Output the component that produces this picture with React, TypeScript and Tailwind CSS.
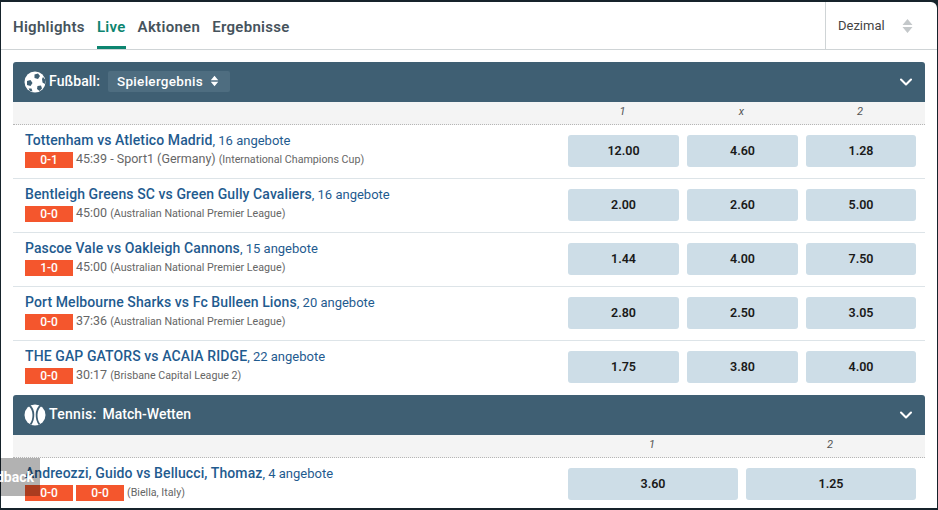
import { ChevronDown } from "lucide-react"

const font = "font-['Roboto','Liberation_Sans',sans-serif]"

const Updown = ({ className }: { className: string }) => (
    <svg width="11" height="16" viewBox="0 0 11 16" className={className}>
        <path d="M5.5 1 L10.5 7 H0.5 Z M5.5 15 L0.5 9 H10.5 Z" fill="currentColor" />
    </svg>
)

const SoccerBall = () => (
    <svg width="22" height="22" viewBox="0 0 22 22" className="shrink-0">
        <circle cx="11" cy="11" r="10.5" fill="#fff" />
        <path d="M10.5 3.5 L14 2.5 L16 5 L14 8 L10.5 7 Z" fill="#3f5f73" />
        <path d="M3 10 L6.5 9 L8.5 12 L6.5 15 L3 14 Z" fill="#3f5f73" />
        <path d="M19 6 L21.5 9 L21 13 L18.5 11.5 L18 8 Z" fill="#3f5f73" />
        <path d="M13.5 15 L17 14.5 L18 17.5 L15.5 20 L13 18 Z" fill="#3f5f73" />
        <path d="M4.5 17.5 L7.5 17.5 L8.5 20.5 L6 20 Z" fill="#3f5f73" />
    </svg>
)

const TennisBall = () => (
    <svg width="22" height="22" viewBox="0 0 22 22" className="shrink-0">
        <circle cx="11" cy="11" r="10.5" fill="#fff" />
        <path d="M5.5 1.5 C10.5 6 10.5 15 6.5 20.5" fill="none" stroke="#3f5f73" strokeWidth="1.8" />
        <path d="M16.5 1.5 C11.5 6 11.5 15 15.5 20.5" fill="none" stroke="#3f5f73" strokeWidth="1.8" />
    </svg>
)

type Match = {
    name: string
    offers: string
    scores: string[]
    time?: string
    info: string
    odds: string[]
}

const football: Match[] = [
    { name: "Tottenham vs Atletico Madrid", offers: "16 angebote", scores: ["0-1"], time: "45:39 - Sport1 (Germany)", info: "(International Champions Cup)", odds: ["12.00", "4.60", "1.28"] },
    { name: "Bentleigh Greens SC vs Green Gully Cavaliers", offers: "16 angebote", scores: ["0-0"], time: "45:00", info: "(Australian National Premier League)", odds: ["2.00", "2.60", "5.00"] },
    { name: "Pascoe Vale vs Oakleigh Cannons", offers: "15 angebote", scores: ["1-0"], time: "45:00", info: "(Australian National Premier League)", odds: ["1.44", "4.00", "7.50"] },
    { name: "Port Melbourne Sharks vs Fc Bulleen Lions", offers: "20 angebote", scores: ["0-0"], time: "37:36", info: "(Australian National Premier League)", odds: ["2.80", "2.50", "3.05"] },
    { name: "THE GAP GATORS vs ACAIA RIDGE", offers: "22 angebote", scores: ["0-0"], time: "30:17", info: "(Brisbane Capital League 2)", odds: ["1.75", "3.80", "4.00"] },
]

const tennis: Match[] = [
    { name: "Andreozzi, Guido vs Bellucci, Thomaz", offers: "4 angebote", scores: ["0-0", "0-0"], info: "(Biella, Italy)", odds: ["3.60", "1.25"] },
]

const SectionHeader = ({ icon, children }: { icon: React.ReactNode; children: React.ReactNode }) => (
    <div className="flex h-10 items-center rounded-t-[3px] bg-[#3f5f73] pl-[11px] pr-[9px] text-white">
        {icon}
        <div className="ml-[3px] flex flex-1 items-center pb-[2px]">{children}</div>
        <ChevronDown size={20} strokeWidth={2.5} />
    </div>
)

const ColumnLabels = ({ labels }: { labels: string[] }) => (
    <div className="flex h-[23px] items-center justify-end border-b border-dotted border-[#b5b5b5] bg-[#f4f4f4] pb-[2px] pr-[9px] text-[11px] italic text-[#555]">
        <div className={`grid w-[348px] gap-2 ${labels.length === 3 ? "grid-cols-[111px_111px_110px]" : "grid-cols-2"}`}>
            {labels.map((l) => (
                <span key={l} className="-translate-x-[1px] text-center">{l}</span>
            ))}
        </div>
    </div>
)

const MatchRow = ({ match, last }: { match: Match; last?: boolean }) => (
    <div className={`flex h-[54px] items-center justify-between border-b pb-[1px] pl-3 pr-[9px] ${last ? "border-transparent" : "border-[#dde4e8]"}`}>
        <div className="flex flex-col pb-[3px]">
            <p className="text-[14px] leading-[18px] text-[#1f5b8f]">
                <span className="font-medium tracking-[0.1px]">{match.name}</span>
                <span className="text-[13px]">, {match.offers}</span>
            </p>
            <div className="mt-[1px] flex items-center gap-[3px] text-[12px] leading-4 text-[#666]">
                {match.scores.map((s, i) => (
                    <span key={i} className="block h-4 w-12 bg-[#f4562d] text-center font-medium text-white">{s}</span>
                ))}
                <span>
                    {match.time && <span className="mr-[3px] text-[12.5px]">{match.time}</span>}
                    <span className="text-[10.7px]">{match.info}</span>
                </span>
            </div>
        </div>
        <div className={`grid w-[348px] gap-2 ${match.odds.length === 3 ? "grid-cols-[111px_111px_110px]" : "grid-cols-2"}`}>
            {match.odds.map((o) => (
                <button key={o} className="h-8 rounded-[3px] bg-[#cddde7] text-[12.5px] font-semibold text-[#1a1a1a]">{o}</button>
            ))}
        </div>
    </div>
)

const App = () => {
    return (
        <div className={`relative h-[510px] w-[938px] overflow-hidden bg-[#16232b] ${font}`}>
            <div className="ml-[1px] mt-[2px] h-[506px] w-[936px] overflow-hidden rounded-tr-[6px] bg-white">
                <div className="flex h-12 items-stretch justify-between border-b border-[#cfd4d6]">
                    <nav className="flex gap-[12px] pl-3 text-[15px] font-semibold tracking-[0.3px] text-[#46535c]">
                        <a className="flex items-center pt-[4px]">Highlights</a>
                        <a className="flex items-center border-b-[3px] border-[#0d8570] pt-[7px] text-[#0d8570]">Live</a>
                        <a className="flex items-center pt-[4px]">Aktionen</a>
                        <a className="flex items-center pt-[4px]">Ergebnisse</a>
                    </nav>
                    <div className="flex w-[112px] items-center border-l border-[#cfd4d6] pl-3 text-[13px] text-[#444]">
                        <span>Dezimal</span>
                        <Updown className="ml-[17px] text-[#c4c8ca]" />
                    </div>
                </div>
                <div className="pl-3 pr-3 pt-3">
                    <SectionHeader icon={<SoccerBall />}>
                        <span className="text-[14px] font-medium tracking-[0.1px]">Fußball:</span>
                        <span className="ml-2 flex h-[21px] items-center gap-[7px] rounded-[2px] bg-[#4e6d80] pl-[9px] pr-[11px] text-[13.5px] font-medium tracking-[0.3px]">
                            Spielergebnis
                            <Updown className="h-[12px] w-[9px]" />
                        </span>
                    </SectionHeader>
                    <ColumnLabels labels={["1", "x", "2"]} />
                    {football.map((m, i) => (
                        <MatchRow key={m.name} match={m} last={i === football.length - 1} />
                    ))}
                    <SectionHeader icon={<TennisBall />}>
                        <span className="text-[14px] font-medium tracking-[0.3px]">Tennis:</span>
                        <span className="ml-[6px] text-[14px] font-medium">Match-Wetten</span>
                    </SectionHeader>
                    <ColumnLabels labels={["1", "2"]} />
                    {tennis.map((m) => (
                        <MatchRow key={m.name} match={m} last />
                    ))}
                </div>
            </div>
            <div className="absolute left-0 top-[458px] flex h-[38px] w-10 items-center justify-end overflow-hidden bg-black/30 pr-[6px] text-[14px] font-bold text-white">
                <span>dback</span>
            </div>
        </div>
    )
}

export default App
